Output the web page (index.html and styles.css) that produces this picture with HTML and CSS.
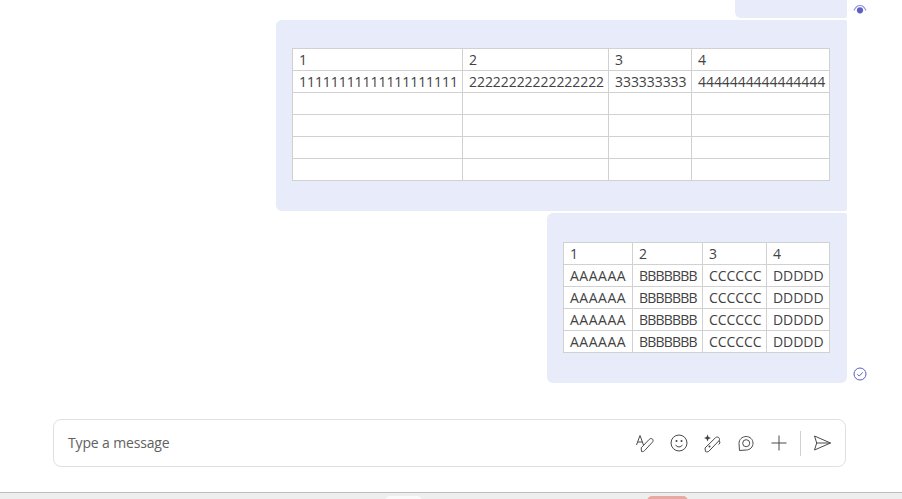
FILE: index.html
```html
<!DOCTYPE html>
<html lang="en">
<head>
    <meta charset="UTF-8">
    <meta name="viewport" content="width=device-width, initial-scale=1.0">
    <title>Chat</title>
    <link rel="stylesheet" href="styles.css">
</head>
<body>

    <div class="messages">
        <div class="row row-top">
            <div class="bubble bubble-stub"></div>
            <div class="status">
                <svg width="14" height="10" viewBox="0 0 14 10">
                    <path d="M1 6.500C2.500 3 4.500 1.500 7 1.500S11.500 3 13 6.500" fill="none" stroke="#8b8fe0" stroke-width="1.100"/>
                    <circle cx="7" cy="6.300" r="3.100" fill="#5b5fc7"/>
                </svg>
            </div>
        </div>

        <div class="row">
            <div class="bubble bubble-wide">
                <table class="grid grid-wide">
                    <tr><td class="w1">1</td><td class="w2">2</td><td class="w3">3</td><td class="w4">4</td></tr>
                    <tr><td>11111111111111111111</td><td>22222222222222222</td><td>333333333</td><td>4444444444444444</td></tr>
                    <tr><td></td><td></td><td></td><td></td></tr>
                    <tr><td></td><td></td><td></td><td></td></tr>
                    <tr><td></td><td></td><td></td><td></td></tr>
                    <tr><td></td><td></td><td></td><td></td></tr>
                </table>
            </div>
            <div class="status"></div>
        </div>

        <div class="row">
            <div class="bubble bubble-small">
                <table class="grid grid-small">
                    <tr><td class="s1">1</td><td class="s2">2</td><td class="s3">3</td><td class="s4">4</td></tr>
                    <tr><td class="cell-a">AAAAAA</td><td class="cell-b">BBBBBBB</td><td>CCCCCC</td><td>DDDDD</td></tr>
                    <tr><td class="cell-a">AAAAAA</td><td class="cell-b">BBBBBBB</td><td>CCCCCC</td><td>DDDDD</td></tr>
                    <tr><td class="cell-a">AAAAAA</td><td class="cell-b">BBBBBBB</td><td>CCCCCC</td><td>DDDDD</td></tr>
                    <tr><td class="cell-a">AAAAAA</td><td class="cell-b">BBBBBBB</td><td>CCCCCC</td><td>DDDDD</td></tr>
                </table>
            </div>
            <div class="status status-end">
                <svg width="14" height="14" viewBox="0 0 14 14">
                    <circle cx="7" cy="7" r="6" fill="none" stroke="#5b5fc7" stroke-width="1"/>
                    <path d="M4.300 7.200L6.200 9.100L9.800 5.300" fill="none" stroke="#5b5fc7" stroke-width="1"/>
                </svg>
            </div>
        </div>
    </div>

    <div class="composer">
        <span class="placeholder">Type a message</span>
        <div class="tools">
            <div class="tool-group">
                <!-- format -->
                <svg class="tool" width="20" height="20" viewBox="0 0 20 20">
                    <path d="M1.500 12L5 2.500L8.500 12M2.700 9H7.300" />
                    <path d="M6.500 18.500L6.200 14.800L14.300 6.300C15.300 5.300 16.700 5.300 17.500 6.100C18.300 6.900 18.300 8.200 17.400 9.200L9.500 17.700C8.600 18.600 7.500 18.800 6.500 18.500Z" />
                </svg>
                <!-- emoji -->
                <svg class="tool" width="20" height="20" viewBox="0 0 20 20">
                    <circle cx="10" cy="10" r="8" />
                    <path d="M6.500 11.800C7.300 13.200 8.500 13.900 10 13.900S12.700 13.200 13.500 11.800" />
                    <circle class="dot" cx="7.500" cy="8" r="1" />
                    <circle class="dot" cx="12.500" cy="8" r="1" />
                </svg>
                <!-- copilot pen -->
                <svg class="tool" width="20" height="20" viewBox="0 0 20 20">
                    <path class="dot" d="M5.500 1.500L6.500 4L9 5L6.500 6L5.500 8.500L4.500 6L2 5L4.500 4Z" />
                    <path d="M3.500 18.500L3 15L13.500 4.700C14.500 3.800 16 3.800 16.900 4.700C17.800 5.600 17.700 7 16.800 7.900L6.800 18.300C5.800 19 4.500 19.200 3.500 18.500Z" />
                    <path d="M17.300 7.500L18 10L16.500 11.500" />
                    <circle class="dot" cx="7.500" cy="13.500" r="1" />
                </svg>
                <!-- loop -->
                <svg class="tool" width="20" height="20" viewBox="0 0 20 20">
                    <path d="M3.500 17.500L3 10.500C3 6.500 6 3.500 10.200 3.500C14 3.500 17 6.500 17 10.200C17 14 14 17 10.200 17Z" />
                    <circle cx="10.200" cy="10.200" r="3.500" />
                </svg>
                <!-- plus -->
                <svg class="tool" width="20" height="20" viewBox="0 0 20 20">
                    <path d="M10 2.500V17.500M2.500 10H17.500" />
                </svg>
            </div>
            <div class="divider"></div>
            <!-- send -->
            <svg class="tool" width="20" height="20" viewBox="0 0 20 20">
                <path d="M2.500 3L18.500 10L2.500 17L4.700 10ZM4.700 10H18.500" />
            </svg>
        </div>
    </div>

    <div class="taskbar">
        <div class="pill pill-white"></div>
        <div class="pill pill-red"></div>
    </div>

</body>
</html>
```

FILE: styles.css
```css
body {
    font-family: 'Open Sans', sans-serif;
    font-size: 14px;
    margin: 0;
    padding: 0;
    height: 499px;
    overflow: hidden;
    display: flex;
    flex-direction: column;
    background: #fff;
    color: #424242;
}

.messages {
    flex: 1;
    display: flex;
    flex-direction: column;
    gap: 2px;
}

.row {
    display: flex;
    justify-content: flex-end;
    padding-right: 55px;
}

.bubble {
    background: #e8ebfa;
    border-radius: 6px;
}

.bubble-stub {
    width: 112px;
    height: 18px;
    border-radius: 0 0 2px 6px;
}

.bubble-wide {
    width: 571px;
    height: 191px;
    box-sizing: border-box;
    padding: 28px 17px 0 16px;
    border-radius: 6px 2px 2px 6px;
}

.bubble-small {
    width: 300px;
    height: 170px;
    box-sizing: border-box;
    padding: 29px 17px 0 16px;
    border-radius: 6px 2px 6px 6px;
}

.status {
    width: 20px;
    margin-right: -20px;
    padding-left: 6px;
    box-sizing: border-box;
    display: flex;
}

.row-top .status {
    padding-top: 4px;
}

.status-end {
    align-items: flex-end;
    padding-bottom: 2px;
}

.grid {
    border-collapse: collapse;
    table-layout: fixed;
    background: #fff;
    width: 537px;
}

.grid-small {
    width: 266px;
}

.grid td {
    border: 1px solid #d1d1d1;
    height: 22px;
    padding: 0 0 0 6px;
    box-sizing: border-box;
    line-height: 21px;
    white-space: nowrap;
    overflow: hidden;
    color: #424242;
    letter-spacing: -0.06px;
}

.grid td.cell-a {
    letter-spacing: 0.5px;
}

.grid td.cell-b {
    letter-spacing: -0.8px;
}

.w1 { width: 170px; }
.w2 { width: 146px; }
.w3 { width: 83px; }
.w4 { width: 138px; }

.s1 { width: 69px; }
.s2 { width: 70px; }
.s3 { width: 64px; }
.s4 { width: 63px; }

.composer {
    margin: 0 56px 25px 53px;
    height: 48px;
    box-sizing: border-box;
    border: 1px solid #e0e0e0;
    border-radius: 8px;
    display: flex;
    align-items: center;
    justify-content: space-between;
    padding: 0 13px 0 14px;
}

.placeholder {
    color: #616161;
    letter-spacing: -0.15px;
    margin-bottom: 2px;
}

.tools {
    display: flex;
    align-items: center;
    gap: 11px;
}

.tool-group {
    display: flex;
    align-items: center;
    gap: 13.500px;
}

.tool {
    display: block;
    fill: none;
    stroke: #4a4a4a;
    stroke-width: 1;
}

.tool .dot {
    fill: #424242;
    stroke: none;
}

.divider {
    width: 1px;
    height: 25px;
    background: #d1d1d1;
}

.taskbar {
    height: 7px;
    box-sizing: border-box;
    background: #eeeeee;
    border-top: 1px solid #bdbdbd;
    display: flex;
    padding: 3px 0 0 385px;
    overflow: hidden;
}

.pill {
    height: 12px;
    border-radius: 5px;
}

.pill-white {
    width: 37px;
    background: #fafafa;
}

.pill-red {
    width: 41px;
    margin-left: 225px;
    background: #e8a9a4;
}
```
